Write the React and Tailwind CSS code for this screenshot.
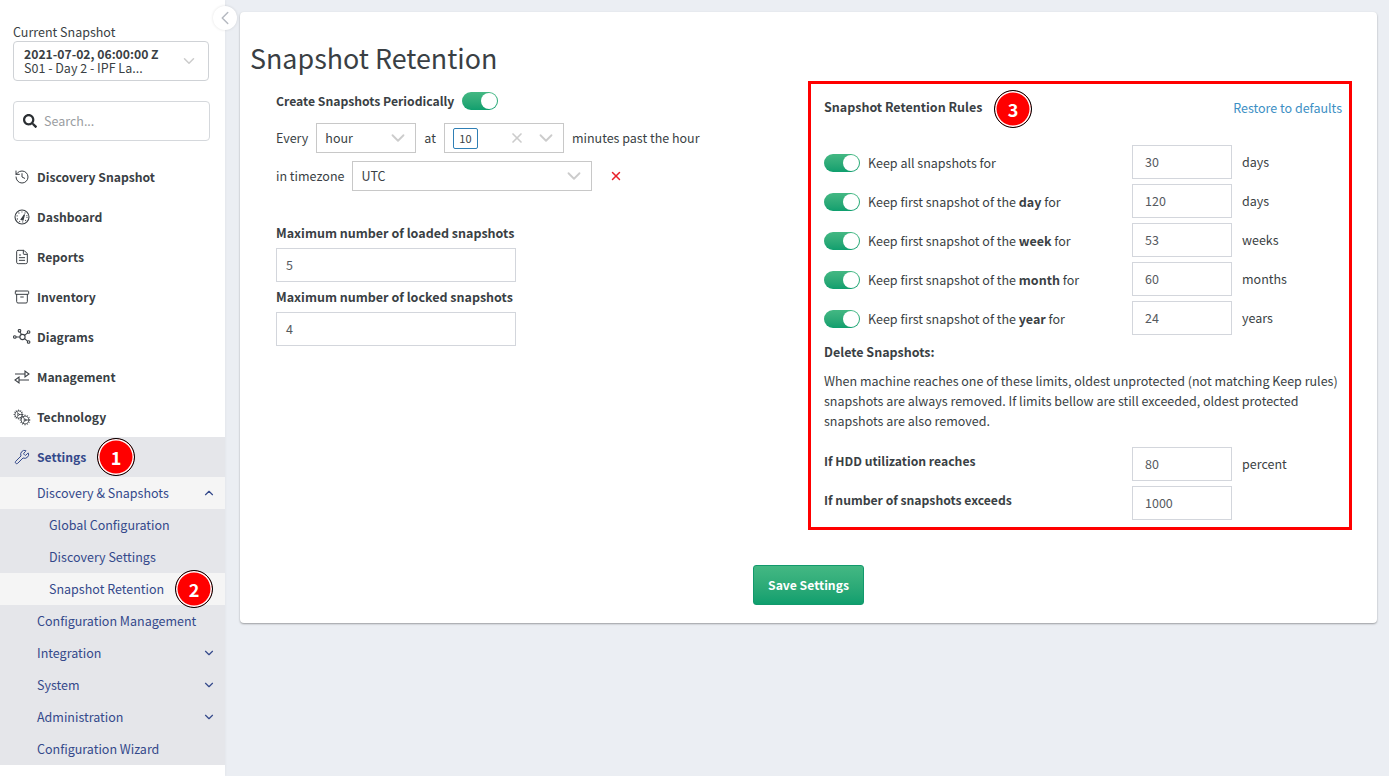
import React from "react";
import { History, FileText, Archive, Wrench, Cog, ChevronDown, ChevronUp, ChevronLeft, X } from "lucide-react";
import { FaSearch } from "react-icons/fa";

const FONT = "font-['Noto_Sans_CJK_JP','Source_Sans_Pro',sans-serif]";
const BOLD = "text-[12.2px] font-bold";
const HEAVY = "text-[12.5px] font-bold";

function Badge({ n, className }) {
  return (
    <span className={`absolute flex h-[38px] w-[38px] items-center justify-center rounded-full border border-black bg-[#ff0000] text-[18px] leading-none font-bold text-white shadow-[inset_0_0_0_1.5px_#fff] ${className}`}>
      {n}
    </span>
  );
}

function Toggle() {
  return (
    <span className="flex h-[18px] w-[36px] shrink-0 justify-end rounded-full bg-gradient-to-b from-[#43b883] to-[#0e9f6e] p-[1px]">
      <span className="h-[16px] w-[16px] rounded-full bg-white" />
    </span>
  );
}

function Chev({ className = "" }) {
  return <ChevronDown size={22} strokeWidth={2} className={`text-[#cccccc] ${className}`} />;
}

function GaugeIcon() {
  return (
    <svg width="16" height="16" viewBox="0 0 16 16" fill="none" stroke="#3a3f44" strokeWidth="1.1">
      <circle cx="8" cy="8" r="7" />
      <circle cx="8" cy="8" r="5" strokeDasharray="1 2.2" />
      <path d="M7 10.5 L10.5 5.5 L9 11 Z" fill="#3a3f44" />
    </svg>
  );
}
function DiagramIcon() {
  return (
    <svg width="18" height="16" viewBox="0 0 18 16" fill="none" stroke="#3a3f44" strokeWidth="1.1">
      <circle cx="9.5" cy="8" r="2.6" />
      <circle cx="1.8" cy="8" r="1.3" />
      <circle cx="6.5" cy="1.8" r="1.3" />
      <circle cx="15.6" cy="3" r="1.3" />
      <circle cx="15.6" cy="13" r="1.3" />
      <path d="M3 8H7M7 3L8.5 5.6M14.6 3.8L11.5 6.4M14.6 12.2L11.5 9.6" />
    </svg>
  );
}
function MgmtIcon() {
  return (
    <svg width="16" height="16" viewBox="0 0 16 16" fill="none" stroke="#3a3f44" strokeWidth="1.1">
      <path d="M1 5H11M11 2V8L15 5Z" />
      <path d="M15 11H5M5 8V14L1 11Z" />
    </svg>
  );
}
function TechIcon() {
  return (
    <span className="relative block h-4 w-[18px]">
      <Cog size={11} strokeWidth={1.6} className="absolute top-0 left-0 text-[#3a3f44]" />
      <Cog size={12} strokeWidth={1.6} className="absolute right-0 bottom-[-1px] text-[#3a3f44]" />
    </span>
  );
}

const navTop = [
  ["Discovery Snapshot", <History size={16} strokeWidth={1.5} />],
  ["Dashboard", <GaugeIcon />],
  ["Reports", <FileText size={16} strokeWidth={1.5} />],
  ["Inventory", <Archive size={16} strokeWidth={1.5} />],
  ["Diagrams", <span className="-ml-[1px] block"><DiagramIcon /></span>],
  ["Management", <MgmtIcon />],
  ["Technology", <span className="-ml-[1px] block"><TechIcon /></span>],
];

function SubItem({ label, indent, active, chev, children }) {
  return (
    <div className={`relative flex h-8 items-center pr-[9px] text-[12.5px] text-[#34498b] ${indent ? "pl-[49px]" : "pl-[37px]"} ${active ? "bg-[#f5f5f5]" : ""}`}>
      <span className="flex-1 leading-5">{label}</span>
      {chev === "down" && <ChevronDown size={14} strokeWidth={2} className="text-[#34498b]" />}
      {chev === "up" && <ChevronUp size={14} strokeWidth={2} className="text-[#34498b]" />}
      {children}
    </div>
  );
}

function Sidebar() {
  return (
    <aside className="relative flex w-[225px] shrink-0 flex-col bg-white pt-[23px] shadow-[1px_0_2px_rgba(0,0,0,0.03)]">
      <span className="absolute top-[6px] right-[-12px] z-10 flex h-6 w-6 items-center justify-center rounded-full bg-white shadow-[0_0_3px_rgba(0,0,0,0.12)]">
        <ChevronLeft size={22} strokeWidth={1.6} className="text-[#b5b9c0]" />
      </span>
      <div className="px-[13px] text-[12.5px] leading-[17px] text-[#3a3f44]">Current Snapshot</div>
      <div className="mx-[13px] mt-[1px] flex h-10 w-[196px] items-center rounded border border-[#cfd2d6] pr-[10px] pl-[10px]">
        <div className="flex-1 text-[12.5px] leading-[14px] text-[#3a3f44]">
          <div className={BOLD}>2021-07-02, 06:00:00 Z</div>
          <div>S01 - Day 2 - IPF La...</div>
        </div>
        <ChevronDown size={18} strokeWidth={2} className="text-[#cccccc]" />
      </div>
      <div className="mx-[13px] mt-5 flex h-10 w-[197px] items-center rounded border border-[#d5d8dc] pl-[9px] text-[12.5px]">
        <FaSearch size={14} className="text-[#2b2f33]" />
        <span className="ml-[7px] text-[#9a9da1]">Search...</span>
      </div>
      <nav className="mt-4">
        {navTop.map(([label, icon]) => (
          <div key={label} className={`flex h-10 items-center text-[#3a3f44] ${BOLD}`}>
            <span className="flex w-[37px] pl-[14px] [&>*]:shrink-0">{icon}</span>
            {label}
          </div>
        ))}
        <div className="bg-[#e5e6ea]">
          <div className={`relative flex h-10 items-center text-[#34498b] ${BOLD}`}>
            <span className="flex w-[37px] pl-[14px] [&>*]:shrink-0"><Wrench size={16} strokeWidth={1.5} /></span>
            Settings
            <Badge n="1" className="top-[1px] left-[97px]" />
          </div>
          <SubItem label="Discovery & Snapshots" active chev="up" />
          <SubItem label="Global Configuration" indent />
          <SubItem label="Discovery Settings" indent />
          <SubItem label="Snapshot Retention" indent active>
            <Badge n="2" className="top-[-3px] left-[175px]" />
          </SubItem>
          <SubItem label="Configuration Management" />
          <SubItem label="Integration" chev="down" />
          <SubItem label="System" chev="down" />
          <SubItem label="Administration" chev="down" />
          <SubItem label="Configuration Wizard" />
        </div>
      </nav>
    </aside>
  );
}

function SelectBox({ className, children }) {
  return (
    <div className={`flex h-[30px] items-center border border-[#c8c8c8] text-[#3a3f44] ${className}`}>
      {children}
    </div>
  );
}

function Field({ value, className = "" }) {
  return (
    <div className={`flex h-[34px] items-center border border-[#d3d6dc] pl-[9px] text-[#555a60] ${className}`}>
      {value}
    </div>
  );
}

const rules = [
  [<>Keep all snapshots for</>, "30", "days"],
  [<>Keep first snapshot of the <b className={HEAVY}>day</b> for</>, "120", "days"],
  [<>Keep first snapshot of the <b className={HEAVY}>week</b> for</>, "53", "weeks"],
  [<>Keep first snapshot of the <b className={HEAVY}>month</b> for</>, "60", "months"],
  [<>Keep first snapshot of the <b className={HEAVY}>year</b> for</>, "24", "years"],
];

function LeftForm() {
  return (
    <div className="w-[558px] shrink-0 pl-[26px] text-[12.5px] text-[#3a3f44]">
      <div className={`flex h-[18px] items-center gap-2 ${BOLD}`}>
        Create Snapshots Periodically
        <Toggle />
      </div>
      <div className="mt-[13px] flex items-center">
        <span>Every</span>
        <SelectBox className="ml-2 w-[100px] pr-[6px] pl-2"><span className="flex-1">hour</span><Chev /></SelectBox>
        <span className="ml-2">at</span>
        <SelectBox className="ml-2 w-[120px] pr-[6px] pl-2">
          <span className="flex h-[21px] w-[25px] items-center justify-center rounded-[2px] border border-[#2f7fb5] text-[11px]">10</span>
          <span className="flex-1" />
          <X size={16} strokeWidth={2.5} className="mr-[10px] text-[#cccccc]" />
          <Chev />
        </SelectBox>
        <span className="ml-2">minutes past the hour</span>
      </div>
      <div className="mt-2 flex items-center">
        <span>in timezone</span>
        <SelectBox className="ml-2 w-[240px] pr-[6px] pl-2"><span className="flex-1">UTC</span><Chev /></SelectBox>
        <X size={14} strokeWidth={2.5} className="ml-[17px] text-[#e8202a]" />
      </div>
      <div className={`mt-[32px] leading-5 ${HEAVY}`}>Maximum number of loaded snapshots</div>
      <Field value="5" className="mt-[5px] w-[240px] border-[#c9ccd2]" />
      <div className={`mt-[5px] leading-5 ${HEAVY}`}>Maximum number of locked snapshots</div>
      <Field value="4" className="mt-[5px] w-[240px] border-[#c9ccd2]" />
    </div>
  );
}

function RulesPanel() {
  return (
    <div className="relative h-[449px] w-[544px] shrink-0 border-[3px] border-[#ff0000] pr-[7px] pl-[13px] text-[12.5px] text-[#3a3f44]">
      <div className="flex h-[45px] items-center justify-between">
        <span className={HEAVY}>Snapshot Retention Rules</span>
        <span className="pt-[2px] text-[#3d8fc4]">Restore to defaults</span>
      </div>
      <Badge n="3" className="top-[6px] left-[183px]" />
      <div className="mt-[16px] flex flex-col gap-[5px]">
        {rules.map(([label, val, unit], i) => (
          <div key={i} className="flex h-[34px] items-center">
            <span className="translate-y-[1px]"><Toggle /></span>
            <span className="ml-2 w-[264px] translate-y-[1px]">{label}</span>
            <Field value={val} className="w-[100px] pl-[12px]" />
            <span className="ml-[10px]">{unit}</span>
          </div>
        ))}
      </div>
      <div className={`mt-[7px] leading-5 ${HEAVY}`}>Delete Snapshots:</div>
      <p className="mt-[9px] leading-5">
        When machine reaches one of these limits, oldest unprotected (not matching Keep rules) snapshots are always removed. If limits bellow are still exceeded, oldest protected snapshots are also removed.
      </p>
      <div className="mt-[16px] flex h-[34px]">
        <span className={`w-[308px] pt-[4px] leading-5 ${BOLD}`}>If HDD utilization reaches</span>
        <Field value="80" className="w-[100px] pl-[12px]" />
        <span className="ml-[10px] self-center">percent</span>
      </div>
      <div className="mt-[5px] flex h-[34px]">
        <span className={`w-[308px] pt-[4px] leading-5 ${BOLD}`}>If number of snapshots exceeds</span>
        <Field value="1000" className="w-[100px] pl-[12px]" />
      </div>
    </div>
  );
}

export default function App() {
  return (
    <div className={`flex h-[776px] w-[1389px] overflow-hidden bg-[#ebeef3] leading-5 ${FONT}`}>
      <Sidebar />
      <main className="flex-1 pt-3 pr-3 pl-[15px]">
        <div className="h-[611px] rounded bg-white pl-[10px] shadow-[0_1px_2px_rgba(0,0,0,0.35)]">
          <h1 className="pt-[26px] text-[26.85px] leading-[40px] font-normal text-[#3a3f44]">Snapshot Retention</h1>
          <div className="mt-[3px] flex items-start">
            <div className="pt-[11px]"><LeftForm /></div>
            <RulesPanel />
          </div>
          <div className="mt-[35px] flex pl-[503px]">
            <button className="flex h-10 w-[111px] items-center justify-center rounded-[3px] border border-[#12996c] bg-gradient-to-b from-[#43b883] to-[#0e9f6e] text-white">
              <span className={BOLD}>Save Settings</span>
            </button>
          </div>
        </div>
      </main>
    </div>
  );
}
